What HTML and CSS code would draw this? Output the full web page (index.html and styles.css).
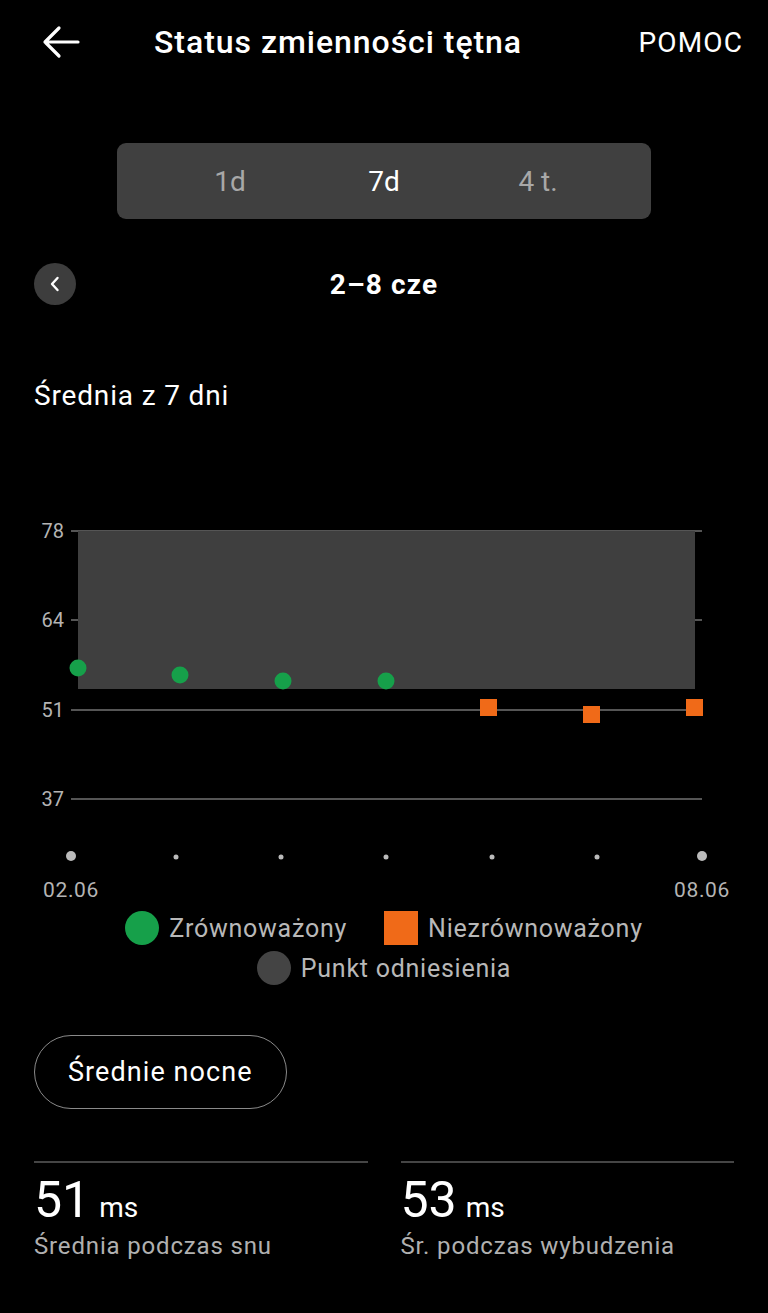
FILE: index.html
```html
<!DOCTYPE html>
<html lang="pl">
<head>
  <meta charset="UTF-8">
  <title>Status zmienności tętna</title>
  <link rel="stylesheet" href="styles.css">
</head>
<body>
  <header class="topbar">
    <a class="back" href="#">
      <svg width="40" height="40" viewBox="0 0 40 40"><path d="M38 20H5M19 6L5 20l14 14" fill="none" stroke="#fff" stroke-width="3.2" stroke-linecap="round" stroke-linejoin="round"/></svg>
    </a>
    <h1 class="title">Status zmienności tętna</h1>
    <a class="help" href="#">POMOC</a>
  </header>

  <div class="tabs">
    <span class="tab">1d</span>
    <span class="tab active">7d</span>
    <span class="tab">4 t.</span>
  </div>

  <div class="range">
    <button class="prev">
      <svg width="14" height="18" viewBox="0 0 14 18"><path d="M9.5 3L4 9l5.5 6" fill="none" stroke="#fff" stroke-width="2.4" stroke-linecap="round" stroke-linejoin="round"/></svg>
    </button>
    <div class="range-label">2–8 cze</div>
    <span></span>
  </div>

  <h2 class="section">Średnia z 7 dni</h2>

  <svg class="chart" width="768" height="400" viewBox="0 0 768 400">
    <g stroke="#555" stroke-width="2">
      <line x1="71" y1="25" x2="702" y2="25"/>
      <line x1="71" y1="114" x2="702" y2="114"/>
      <line x1="71" y1="204" x2="702" y2="204"/>
      <line x1="71" y1="293" x2="702" y2="293"/>
    </g>
    <rect x="78" y="25" width="617" height="158" fill="#3f3f3f"/>
    <g class="axis" text-anchor="end">
      <text x="64" y="32">78</text>
      <text x="64" y="121">64</text>
      <text x="64" y="211">51</text>
      <text x="64" y="300">37</text>
    </g>
    <g fill="#16a04a">
      <circle cx="78" cy="162" r="8.5"/>
      <circle cx="180" cy="169" r="8.5"/>
      <circle cx="283" cy="175" r="8.5"/>
      <circle cx="386" cy="175" r="8.5"/>
    </g>
    <g fill="#f06a18">
      <rect x="480" y="193" width="17" height="17"/>
      <rect x="583" y="200" width="17" height="17"/>
      <rect x="686" y="193" width="17" height="17"/>
    </g>
    <g fill="#bbb">
      <circle cx="71" cy="350" r="5"/>
      <circle cx="176" cy="351" r="2.5"/>
      <circle cx="281" cy="351" r="2.5"/>
      <circle cx="386" cy="351" r="2.5"/>
      <circle cx="492" cy="351" r="2.5"/>
      <circle cx="597" cy="351" r="2.5"/>
      <circle cx="702" cy="350" r="5"/>
    </g>
    <g class="axis dates" text-anchor="middle">
      <text x="71" y="391">02.06</text>
      <text x="702" y="391">08.06</text>
    </g>
  </svg>

  <div class="legend">
    <div class="legend-row">
      <span class="item"><i class="mark dot green"></i>Zrównoważony</span>
      <span class="item"><i class="mark square orange"></i>Niezrównoważony</span>
    </div>
    <div class="legend-row">
      <span class="item"><i class="mark dot grey"></i>Punkt odniesienia</span>
    </div>
  </div>

  <button class="pill">Średnie nocne</button>

  <div class="stats">
    <div class="stat">
      <div class="value">51<span class="unit">ms</span></div>
      <div class="caption">Średnia podczas snu</div>
    </div>
    <div class="stat">
      <div class="value">53<span class="unit">ms</span></div>
      <div class="caption">Śr. podczas wybudzenia</div>
    </div>
  </div>
</body>
</html>
```

FILE: styles.css
```css
body { margin: 0; background: #000; color: #fff; font-family: Roboto, "Noto Sans", sans-serif; width: 768px; }
a { color: inherit; text-decoration: none; }
button { font-family: inherit; cursor: pointer; }

.topbar { height: 84px; display: flex; align-items: center; padding: 0 26px 0 40px; }
.back { display: flex; width: 40px; height: 40px; }
.title { margin: 0 0 0 74px; font-size: 32px; font-weight: 500; letter-spacing: 0.03em; flex: 1; }
.help { font-size: 28px; letter-spacing: 0.04em; margin-right: -1px; }

.tabs { width: 534px; height: 76px; margin: 59px auto 0; box-sizing: border-box; padding: 0 36px; background: #404040; border-radius: 9px; display: grid; grid-template-columns: repeat(3, 1fr); align-items: center; }
.tab { text-align: center; font-size: 28px; color: #a8a8a8; }
.tab.active { color: #fff; }

.range { margin-top: 44px; padding: 0 34px; height: 42px; display: grid; grid-template-columns: 1fr auto 1fr; align-items: center; }
.prev { width: 42px; height: 42px; border: 0; border-radius: 50%; background: #3d3d3d; display: flex; align-items: center; justify-content: center; padding: 0; }
.range-label { font-size: 28px; font-weight: 700; letter-spacing: 0.04em; }

.section { margin: 73px 0 0 34px; font-size: 28px; font-weight: 400; line-height: 36px; letter-spacing: 0.03em; }

.chart { display: block; margin-top: 92px; }
.axis text { font-size: 20px; fill: #b4b4b4; font-family: Roboto, sans-serif; }
.dates text { font-size: 21px; letter-spacing: 0.03em; }

.legend { margin-top: 2px; }
.legend-row { height: 40px; display: flex; justify-content: center; align-items: center; gap: 37px; }
.item { display: flex; align-items: center; font-size: 25px; letter-spacing: 0.03em; color: #b8b8b8; }
.mark { display: inline-block; width: 34px; height: 34px; margin-right: 10px; }
.dot { border-radius: 50%; }
.green { background: #16a04a; }
.orange { background: #f06a18; }
.grey { background: #444; }

.pill { display: block; margin: 47px 0 0 34px; height: 74px; padding: 0 33px; border: 1.5px solid #8a8a8a; border-radius: 37px; background: #000; color: #fff; font-size: 27px; letter-spacing: 0.04em; }

.stats { margin: 52px 34px 0; display: grid; grid-template-columns: 1fr 1fr; gap: 33px; }
.stat { border-top: 2px solid #454545; padding-top: 9px; }
.value { font-size: 50px; line-height: 56px; }
.unit { font-size: 28px; margin-left: 9px; }
.caption { margin-top: -5px; font-size: 24px; color: #b0b0b0; line-height: 30px; letter-spacing: 0.035em; }
```
